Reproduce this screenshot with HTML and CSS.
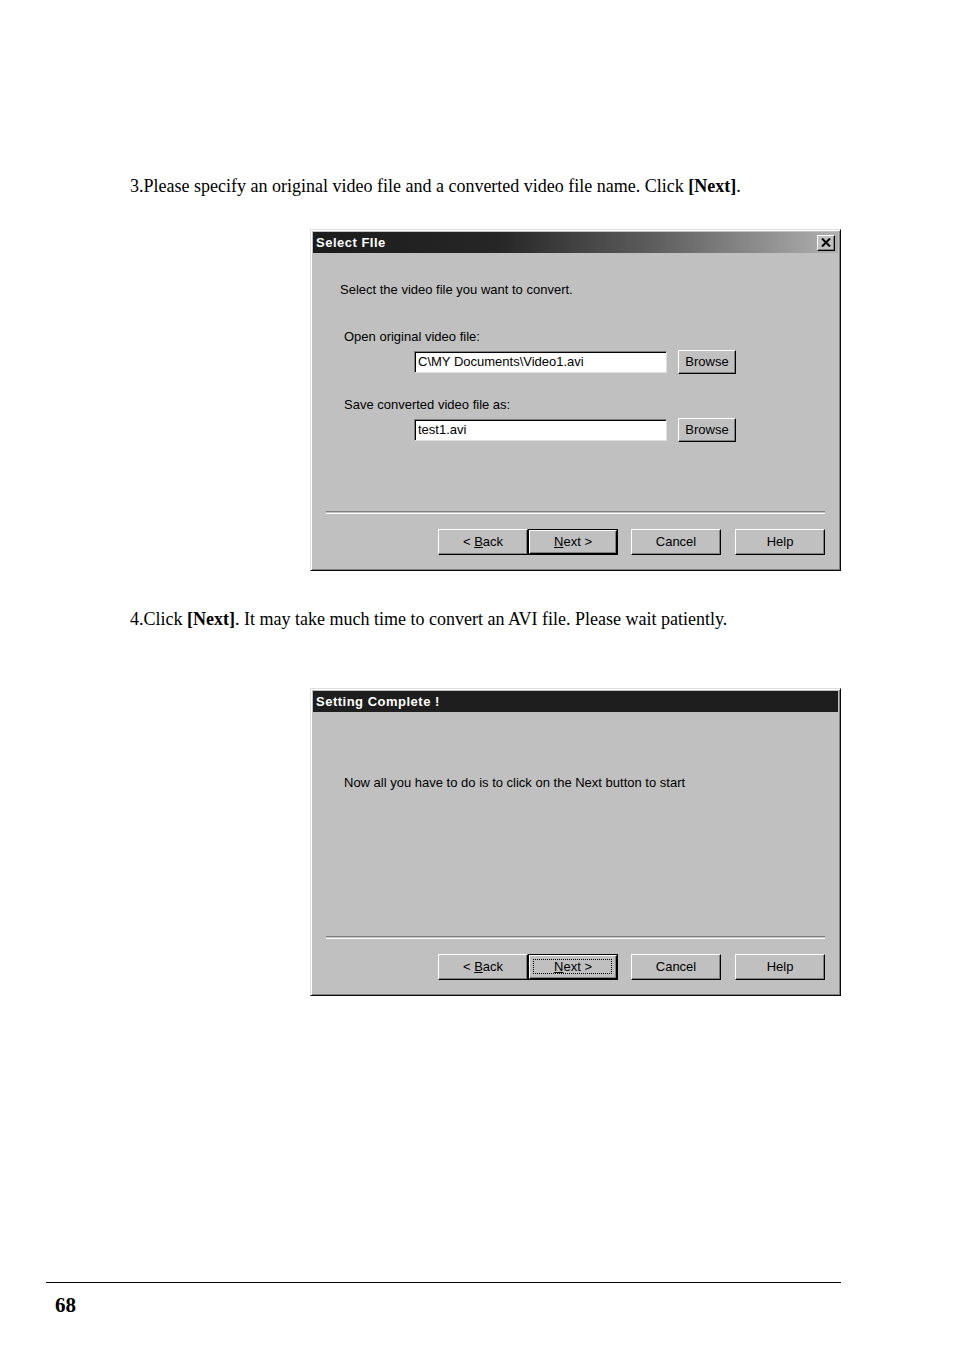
FILE: index.html
```html
<!DOCTYPE html>
<html lang="en">
<head>
    <meta charset="UTF-8">
    <title>Convert Video - Page 68</title>
    <link rel="stylesheet" href="styles.css">
</head>
<body>
    <div class="page">
        <p class="step step-first">3.Please specify an original video file and a converted video file name. Click <strong>[Next]</strong>.</p>

        <div class="dialog dialog-select">
            <div class="titlebar gradient">
                <span class="title">Select FIle</span>
                <span class="close-btn">
                    <svg width="10" height="9" viewBox="0 0 10 9">
                        <path d="M1 0.5 L9 8.5 M9 0.5 L1 8.5" stroke="#000" stroke-width="2" fill="none"/>
                    </svg>
                </span>
            </div>
            <div class="dialog-body">
                <div class="intro">Select the video file you want to convert.</div>

                <div class="field-label label-open">Open original video file:</div>
                <div class="field-row">
                    <div class="textbox">C\MY Documents\Video1.avi</div>
                    <div class="btn btn-small">Browse</div>
                </div>

                <div class="field-label label-save">Save converted video file as:</div>
                <div class="field-row">
                    <div class="textbox">test1.avi</div>
                    <div class="btn btn-small">Browse</div>
                </div>

                <div class="dialog-footer">
                    <div class="separator"></div>
                    <div class="buttons">
                        <div class="btn btn-back"><span>&lt; <u>B</u>ack</span></div>
                        <div class="btn btn-default"><span class="btn-face"><span><u>N</u>ext &gt;</span></span></div>
                        <div class="btn btn-cancel">Cancel</div>
                        <div class="btn btn-help">Help</div>
                    </div>
                </div>
            </div>
        </div>

        <p class="step step-second">4.Click <strong>[Next]</strong>. It may take much time to convert an AVI file. Please wait patiently.</p>

        <div class="dialog dialog-complete">
            <div class="titlebar solid">
                <span class="title">Setting Complete !</span>
            </div>
            <div class="dialog-body">
                <div class="message">Now all you have to do is to click on the Next button to start</div>

                <div class="dialog-footer">
                    <div class="separator"></div>
                    <div class="buttons">
                        <div class="btn btn-back"><span>&lt; <u>B</u>ack</span></div>
                        <div class="btn btn-default"><span class="btn-face focused"><span><u>N</u>ext &gt;</span></span></div>
                        <div class="btn btn-cancel">Cancel</div>
                        <div class="btn btn-help">Help</div>
                    </div>
                </div>
            </div>
        </div>

        <footer>
            <div class="rule"></div>
            <div class="page-number">68</div>
        </footer>
    </div>
</body>
</html>
```

FILE: styles.css
```css
body {
    margin: 0;
    padding: 0;
    background-color: #fff;
    font-family: "Liberation Serif", "Times New Roman", serif;
    color: #000;
}
.page {
    width: 954px;
    padding-top: 176px;
}
.step {
    margin: 0 0 0 130px;
    font-size: 18px;
    line-height: 20px;
}
.step strong {
    font-weight: bold;
}
.step-first {
    margin-bottom: 33px;
}
.step-second {
    margin-top: 38px;
    margin-bottom: 59px;
}

/* window frame */
.dialog {
    margin-left: 310px;
    width: 531px;
    box-sizing: border-box;
    background: #c0c0c0;
    border: 1px solid;
    border-color: #dfdfdf #0a0a0a #0a0a0a #dfdfdf;
    box-shadow: inset 1px 1px 0 #fff, inset -1px -1px 0 #808080;
    padding: 2px;
    font-family: "Liberation Sans", Arial, sans-serif;
    font-size: 13px;
}
.titlebar {
    height: 21px;
    display: flex;
    align-items: center;
    justify-content: space-between;
    padding: 0 3px;
}
.titlebar.gradient {
    background: linear-gradient(to right, #1c1c1c 0%, #262626 35%, #5e5e5e 65%, #b0b0b0 100%);
}
.titlebar.solid {
    background: #1e1e1e;
}
.title {
    color: #fff;
    font-weight: bold;
    font-size: 13px;
    letter-spacing: 0.5px;
}
.close-btn {
    width: 16px;
    height: 14px;
    background: #c0c0c0;
    display: flex;
    align-items: center;
    justify-content: center;
    border: 1px solid;
    border-color: #fff #000 #000 #fff;
    box-shadow: inset -1px -1px 0 #808080;
}
.dialog-body {
    display: flex;
    flex-direction: column;
    padding: 0 0 13px 0;
}
.dialog-select .dialog-body {
    height: 315px;
    box-sizing: border-box;
}
.dialog-complete .dialog-body {
    height: 281px;
    box-sizing: border-box;
}
.intro {
    margin: 29px 0 0 27px;
    line-height: 16px;
}
.field-label {
    margin-left: 31px;
    line-height: 16px;
}
.label-open {
    margin-top: 31px;
}
.label-save {
    margin-top: 23px;
}
.field-row {
    display: flex;
    align-items: center;
    gap: 11px;
    margin: 5px 0 0 101px;
    height: 24px;
}
.textbox {
    width: 253px;
    height: 22px;
    box-sizing: border-box;
    background: #fff;
    border: 1px solid;
    border-color: #808080 #dfdfdf #dfdfdf #808080;
    box-shadow: inset 1px 1px 0 #000;
    padding: 2px 0 0 3px;
    line-height: 16px;
    white-space: nowrap;
}
.message {
    margin: 63px 0 0 31px;
    line-height: 16px;
}

/* buttons */
.btn {
    box-sizing: border-box;
    background: #c0c0c0;
    border: 1px solid;
    border-color: #fff #000 #000 #fff;
    box-shadow: inset -1px -1px 0 #808080;
    display: flex;
    align-items: center;
    justify-content: center;
    line-height: 16px;
}
.btn-small {
    width: 58px;
    height: 24px;
}
.dialog-footer {
    margin-top: auto;
}
.separator {
    margin: 0 13px;
    height: 1px;
    border-top: 1px solid #808080;
    border-bottom: 1px solid #fff;
}
.buttons {
    display: flex;
    justify-content: flex-end;
    margin: 15px 13px 0 0;
}
.buttons .btn {
    width: 90px;
    height: 26px;
}
.btn-default {
    border: 1px solid #000;
    box-shadow: none;
    padding: 0;
}
.btn-default .btn-face {
    flex: 1;
    align-self: stretch;
    display: flex;
    align-items: center;
    justify-content: center;
    border: 1px solid;
    border-color: #fff #000 #000 #fff;
    box-shadow: inset -1px -1px 0 #808080;
    position: relative;
}
.btn-face.focused::after {
    content: "";
    position: absolute;
    left: 3px;
    top: 3px;
    right: 4px;
    bottom: 4px;
    border: 1px dotted #000;
}
.btn-cancel {
    margin-left: 13px;
}
.btn-help {
    margin-left: 14px;
}

footer {
    margin-top: 286px;
}
.rule {
    margin-left: 46px;
    width: 795px;
    height: 1px;
    background: #000;
}
.page-number {
    margin: 11px 0 0 55px;
    font-size: 21px;
    line-height: 22px;
    font-weight: bold;
}
```
